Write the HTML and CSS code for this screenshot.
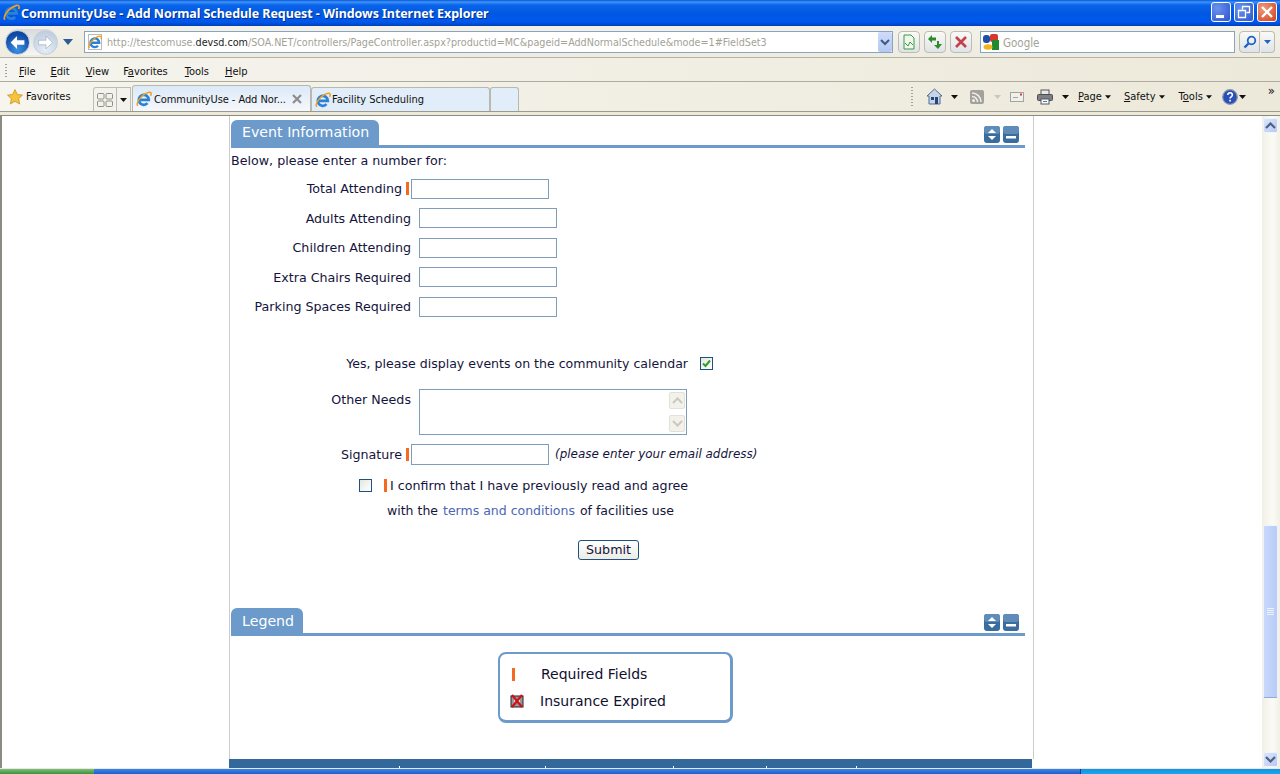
FILE: index.html
```html
<!DOCTYPE html>
<html lang="en">
<head>
<meta charset="utf-8">
<title>CommunityUse - Add Normal Schedule Request</title>
<link rel="stylesheet" href="styles.css">
</head>
<body>
<svg class="defs" width="0" height="0" aria-hidden="true">
  <symbol id="ie" viewBox="0 0 16 16">
    <path d="M3.400 8.800h9.400a5 5 0 1 0-1.300 3.400" fill="none" stroke="#2b82d4" stroke-width="2.700"/>
    <path d="M1.800 14.800C-.8 12 6 3 13 1.300c2.400-.5 2.700 1.600 1.600 3.500" fill="none" stroke="#efa01c" stroke-width="1.500"/>
  </symbol>
  <symbol id="caret" viewBox="0 0 7 4"><path d="M0 0h7L3.500 4z" fill="#111"/></symbol>
  <symbol id="updown" viewBox="0 0 16 17">
    <rect width="16" height="17" rx="3" fill="#3a6d9e"/><rect width="16" height="8" rx="3" fill="#5f8cb8"/>
    <path d="M8 3l4 4H4zM8 14l-4-4h8z" fill="#fff"/>
  </symbol>
  <symbol id="minus" viewBox="0 0 16 17">
    <rect width="16" height="17" rx="3" fill="#3a6d9e"/><rect width="16" height="8" rx="3" fill="#5f8cb8"/>
    <rect x="3" y="10" width="10" height="2.500" fill="#fff"/>
  </symbol>
</svg>

<div class="window">
  <header class="titlebar">
    <svg class="ti-icon" width="17" height="17"><use href="#ie"/></svg>
    <span class="ti-text">CommunityUse - Add Normal Schedule Request - Windows Internet Explorer</span>
    <span class="winbtn win-min"><svg width="20" height="20" viewBox="0 0 20 20"><rect x="5" y="13" width="8" height="3" fill="#fff"/></svg></span>
    <span class="winbtn win-max"><svg width="20" height="20" viewBox="0 0 20 20"><path d="M8.500 7.500V4.500h7v6h-3M4.500 8.500h7v7h-7z" fill="none" stroke="#fff" stroke-width="1.300"/></svg></span>
    <span class="winbtn win-close"><svg width="20" height="20" viewBox="0 0 20 20"><path d="M5 5l10 10M15 5L5 15" stroke="#fff" stroke-width="2.400"/></svg></span>
  </header>

  <div class="navbar">
    <div class="backfwd">
      <span class="round round-back"><svg width="23" height="23" viewBox="0 0 25 25"><path d="M5 12.500l7-7v4.500h8v5h-8v4.500z" fill="#fff"/></svg></span>
      <span class="round round-fwd"><svg width="23" height="23" viewBox="0 0 25 25"><path d="M20 12.500l-7-7v4.500H5v5h8v4.500z" fill="#fff" stroke="#9fb0c4" stroke-width=".8"/></svg></span>
    </div>
    <svg class="nav-drop" width="10" height="6" viewBox="0 0 10 6"><path d="M0 0h10L5 6z" fill="#2c5c94"/></svg>
    <div class="addr">
      <span class="addr-doc"><svg width="14" height="14"><use href="#ie"/></svg></span>
      <span class="addr-text">http://testcomuse.<b>devsd.com</b>/SOA.NET/controllers/PageController.aspx?productid=MC&amp;pageid=AddNormalSchedule&amp;mode=1#FieldSet3</span>
      <span class="addr-go"><svg width="10" height="7" viewBox="0 0 10 7"><path d="M1 1l4 4 4-4" fill="none" stroke="#3d5a86" stroke-width="2"/></svg></span>
    </div>
    <span class="toolbtn tb-compat"><svg width="16" height="16" viewBox="0 0 16 16"><path d="M3 1h7l3 3v11H3z" fill="#eef7ea" stroke="#3a9a46"/><path d="M4 9l3 3 2-4 3 3" fill="none" stroke="#3a9a46"/></svg></span>
    <span class="toolbtn"><svg width="16" height="16" viewBox="0 0 16 16"><path d="M1 5l4-4v2.500h4v3H5V9zM15 10l-4 5-4-4h3V7h2v3z" fill="#2f8a2c"/></svg></span>
    <span class="toolbtn"><svg width="16" height="16" viewBox="0 0 16 16"><path d="M3 3l10 10M13 3L3 13" stroke="#c4404a" stroke-width="2.600"/></svg></span>
    <div class="search">
      <svg width="16" height="16" viewBox="0 0 16 16"><rect width="8" height="8" fill="#d8382c" x="7" rx="2"/><rect x="0" y="1" width="7" height="8" rx="3" fill="#1c4fa8"/><rect x="9" y="6" width="7" height="10" fill="#1f8a2e"/><ellipse cx="5" cy="13" rx="4.500" ry="2.800" fill="#f2b51c"/></svg>
      <span class="search-text">Google</span>
    </div>
    <span class="searchbtn"><svg width="14" height="14" viewBox="0 0 14 14"><circle cx="8.500" cy="5.500" r="3.800" fill="none" stroke="#1e62c8" stroke-width="1.800"/><path d="M5.500 8.500L1.500 12.500" stroke="#1e62c8" stroke-width="2.400"/></svg></span>
    <span class="searchdrop"><svg width="7" height="4" viewBox="0 0 7 4"><path d="M0 0h7L3.500 4z" fill="#1e62c8"/></svg></span>
  </div>

  <nav class="menubar">
    <span class="grip"></span>
    <span class="m-file"><u>F</u>ile</span>
    <span class="m-edit"><u>E</u>dit</span>
    <span class="m-view"><u>V</u>iew</span>
    <span class="m-fav">F<u>a</u>vorites</span>
    <span class="m-tools"><u>T</u>ools</span>
    <span class="m-help"><u>H</u>elp</span>
  </nav>

  <div class="tabbar">
    <svg class="star" width="16" height="16" viewBox="0 0 16 16"><path d="M8 .5l2.300 5 5.200.6-3.900 3.600 1.100 5.300L8 12.300 3.300 15l1.100-5.300L.5 6.100l5.200-.6z" fill="#f6c33a" stroke="#c98a14" stroke-width=".7"/></svg>
    <span class="fav-label">Favorites</span>
    <span class="quick"><svg width="16" height="14" viewBox="0 0 16 14"><g fill="none" stroke="#8f8f86"><rect x=".5" y=".5" width="6.500" height="5.500" rx="1"/><rect x="9" y=".5" width="6.500" height="5.500" rx="1"/><rect x=".5" y="8" width="6.500" height="5.500" rx="1"/><rect x="9" y="8" width="6.500" height="5.500" rx="1"/></g></svg></span>
    <span class="quick-drop"><svg width="7" height="4"><use href="#caret"/></svg></span>
    <div class="tab tab-active">
      <svg width="16" height="16"><use href="#ie"/></svg>
      <span class="tab-label">CommunityUse - Add Nor...</span>
      <svg class="tab-x" width="10" height="10" viewBox="0 0 10 10"><path d="M1 1l8 8M9 1L1 9" stroke="#8d8d8d" stroke-width="2.200"/></svg>
    </div>
    <div class="tab tab-other">
      <svg width="16" height="16"><use href="#ie"/></svg>
      <span class="tab-label">Facility Scheduling</span>
    </div>
    <div class="tab tab-new"></div>

    <span class="grip grip-right"></span>
    <svg class="c-home" width="17" height="17" viewBox="0 0 17 17"><path d="M8.500 1L1 8h2v8h11V8h2z" fill="#c7d5e6" stroke="#4f6c94"/><rect x="9" y="9" width="3" height="7" fill="#27457a"/><rect x="5" y="9" width="3" height="3" fill="#27457a"/></svg>
    <svg class="c-caret-home" width="7" height="4"><use href="#caret"/></svg>
    <svg class="c-rss" width="14" height="14" viewBox="0 0 14 14"><rect width="14" height="14" rx="2" fill="#a3a29a"/><circle cx="3.500" cy="10.500" r="1.500" fill="#eee"/><path d="M2 6.500a5.500 5.500 0 0 1 5.500 5.500M2 3a9 9 0 0 1 9 9" fill="none" stroke="#eee" stroke-width="1.500"/></svg>
    <svg class="c-caret-rss" width="7" height="4" viewBox="0 0 7 4"><path d="M0 0h7L3.500 4z" fill="#c9c8bf"/></svg>
    <svg class="c-mail" width="14" height="10" viewBox="0 0 14 10"><rect x=".5" y=".5" width="13" height="9" fill="#f2f0ea" stroke="#a5a49c"/><rect x="3" y="5" width="5" height="1" fill="#a5a49c"/><rect x="10" y="1.500" width="2" height="2" fill="#d23a3a"/></svg>
    <svg class="c-print" width="16" height="16" viewBox="0 0 16 16"><rect x="4" y="1" width="8" height="5" fill="#e8e8e8" stroke="#555"/><rect x=".5" y="5.500" width="15" height="6" rx="1" fill="#7c8084" stroke="#4b4f53"/><rect x="4" y="10" width="8" height="5" fill="#fff" stroke="#555"/><rect x="6" y="12" width="4" height="1" fill="#3a78c8"/></svg>
    <svg class="c-caret-print" width="7" height="4"><use href="#caret"/></svg>
    <span class="c-menu c-page"><u>P</u>age</span><svg class="c-caret" width="6" height="4"><use href="#caret"/></svg>
    <span class="c-menu c-safety"><u>S</u>afety</span><svg class="c-caret" width="6" height="4"><use href="#caret"/></svg>
    <span class="c-menu c-tools">T<u>o</u>ols</span><svg class="c-caret" width="6" height="4"><use href="#caret"/></svg>
    <svg class="c-help" width="16" height="16" viewBox="0 0 16 16"><circle cx="8" cy="8" r="7.300" fill="#2a50b8" stroke="#8a94ad" stroke-width="1.200"/><path d="M5.800 6c0-3 4.600-3 4.600 0 0 1.800-2.400 1.800-2.400 3.500" fill="none" stroke="#fff" stroke-width="1.500"/><rect x="7.200" y="10.800" width="1.700" height="1.700" fill="#fff"/></svg>
    <svg class="c-caret-help" width="7" height="4"><use href="#caret"/></svg>
    <span class="c-more">»</span>
  </div>

  <div class="chromegap"></div>

  <div class="viewport">
    <main class="page">
      <div class="sections">
        <section>
          <div class="head">
            <h2 class="head-tab tab-event">Event Information</h2>
            <span class="head-btns">
              <svg width="16" height="17"><use href="#updown"/></svg>
              <svg width="16" height="17"><use href="#minus"/></svg>
            </span>
          </div>
          <p class="intro">Below, please enter a number for:</p>
          <div class="row row-req"><label class="lbl lbl-req">Total Attending</label><span class="req"></span><span class="field"></span></div>
          <div class="row"><label class="lbl">Adults Attending</label><span class="field"></span></div>
          <div class="row"><label class="lbl">Children Attending</label><span class="field"></span></div>
          <div class="row"><label class="lbl">Extra Chairs Required</label><span class="field"></span></div>
          <div class="row"><label class="lbl">Parking Spaces Required</label><span class="field"></span></div>

          <div class="row-cal">
            <span class="cal-text">Yes, please display events on the community calendar</span>
            <span class="check check-on"><svg width="9" height="9" viewBox="0 0 9 9"><path d="M1 4.500l2.500 2.500L8 1.500" fill="none" stroke="#2f9c2f" stroke-width="2"/></svg></span>
          </div>

          <div class="row-needs">
            <label class="lbl">Other Needs</label>
            <div class="textarea">
              <span class="ta-btn"><svg width="11" height="7" viewBox="0 0 11 7"><path d="M1 6l4.500-4.500L10 6" fill="none" stroke="#c9c9c0" stroke-width="2"/></svg></span>
              <span class="ta-btn"><svg width="11" height="7" viewBox="0 0 11 7"><path d="M1 1l4.500 4.500L10 1" fill="none" stroke="#c9c9c0" stroke-width="2"/></svg></span>
            </div>
          </div>

          <div class="row-sig">
            <label class="lbl lbl-req">Signature</label><span class="req"></span><span class="field field-sig"></span>
            <em class="hint">(please enter your email address)</em>
          </div>

          <div class="row-confirm">
            <span class="check check-off"></span>
            <span class="req req-confirm"></span>
            <span>I confirm that I have previously read and agree</span>
          </div>
          <div class="row-terms">with the <a class="terms">terms and conditions</a> of facilities use</div>
          <div class="row-submit"><button class="submit" type="button">Submit</button></div>
        </section>

        <section class="legend-section">
          <div class="head">
            <h2 class="head-tab tab-legend">Legend</h2>
            <span class="head-btns">
              <svg width="16" height="17"><use href="#updown"/></svg>
              <svg width="16" height="17"><use href="#minus"/></svg>
            </span>
          </div>
          <div class="legend-box">
            <div class="legend-row"><span class="legend-key"><span class="req"></span></span>Required Fields</div>
            <div class="legend-row"><span class="legend-key"><svg width="14" height="14" viewBox="0 0 14 14"><rect x="1" y="2" width="12" height="11" fill="#9a9a9a" stroke="#222"/><rect x="4" y="5" width="6" height="4" fill="#ddd"/><path d="M2 1l10 12M12 1L2 13" stroke="#d01018" stroke-width="2.200"/></svg></span>Insurance Expired</div>
          </div>
        </section>
      </div>
      <footer class="footbar">
        <span class="tick tick-1"></span><span class="tick tick-2"></span><span class="tick tick-3"></span><span class="tick tick-4"></span><span class="tick tick-5"></span>
      </footer>
    </main>
    <aside class="scrollbar">
      <span class="sb-btn"><svg width="11" height="7" viewBox="0 0 11 7"><path d="M1 6l4.500-4.500L10 6" fill="none" stroke="#4d6185" stroke-width="2.200"/></svg></span>
      <span class="sb-thumb"><svg width="9" height="8" viewBox="0 0 9 8"><path d="M1 .5h7M1 2.500h7M1 4.500h7M1 6.500h7" stroke="#eef2fb"/></svg></span>
      <span class="sb-btn sb-down"><svg width="11" height="7" viewBox="0 0 11 7"><path d="M1 1l4.500 4.500L10 1" fill="none" stroke="#4d6185" stroke-width="2.200"/></svg></span>
    </aside>
  </div>

  <div class="taskbar"><span class="tb-start"></span><span class="tb-tasks"></span><span class="tb-tray"></span></div>
</div>
</body>
</html>
```
FILE: styles.css
```css
* { box-sizing: border-box; }
html, body { margin: 0; height: 774px; overflow: hidden; background: #fff; }
.defs { position: absolute; }
svg { display: block; flex: none; }
.window { width: 1280px; height: 774px; display: flex; flex-direction: column; font-family: "DejaVu Sans Condensed", "DejaVu Sans", sans-serif; font-stretch: condensed; font-size: 11px; color: #111; }

/* title bar */
.titlebar { height: 26px; display: flex; align-items: center; padding: 0 3px 0 3px; background: linear-gradient(#0a57d8 0, #3d94fa 2px, #0a64ea 5px, #0058e2 14px, #0058ee 22px, #0140b8 26px); }
.ti-icon { margin: -1px 1px 0 0; }
.ti-text { color: #fff; font: bold 12.500px "Noto Sans", sans-serif; letter-spacing: -.07px; text-shadow: 1px 1px 0 #03308c; flex: 1; white-space: nowrap; }
.winbtn { width: 20px; height: 20px; margin-left: 3px; border: 1px solid #fff; border-radius: 3px; margin-top: -2px; overflow: hidden; }
.winbtn svg { margin: -1px; }
.win-min, .win-max { background: radial-gradient(circle at 30% 30%, #6a93ee, #2c55cf); }
.win-close { background: radial-gradient(circle at 30% 30%, #ee9a7c, #d2421c); }

/* address row */
.navbar { height: 32px; display: flex; align-items: center; padding: 1px 0 0 5px; background: linear-gradient(#f3f2ea, #eeece0); border-bottom: 1px solid #b5b3a6; }
.backfwd { display: flex; gap: 3px; width: 53px; height: 26px; align-items: center; background: linear-gradient(#d9dbdd, #f5f5f2); border-radius: 13px; }
.round { width: 25px; height: 25px; border-radius: 50%; }
.round-back { background: radial-gradient(circle at 50% 80%, #3e92e6, #1049a4 70%); border: 1px solid #c6d0de; }
.round-fwd { background: radial-gradient(circle at 50% 80%, #e6eef6, #b7c6d8); border: 1px solid #c6d0de; }
.nav-drop { margin-left: 5px; }
.addr { width: 809px; height: 22px; margin-left: 11px; background: #fff; border: 1px solid #8aa4c0; display: flex; align-items: center; padding-left: 3px; }
.addr-doc { width: 14px; height: 16px; background: #fff; border: 1px solid #bbb; margin-right: 5px; }
.addr-doc svg { margin: 0 0 0 -1px; }
.addr-text { flex: 1; color: #a3a296; white-space: nowrap; font-size: 10.700px; margin-top: 1px; }
.addr-text b { color: #222; font-weight: 400; }
.addr-go { width: 14px; height: 20px; background: linear-gradient(#cfdcf8, #b4c8f2); display: flex; align-items: center; justify-content: center; border-radius: 2px; }
.toolbtn { width: 22px; height: 22px; margin-left: 4px; border: 1px solid #bdbcb2; border-radius: 4px; background: linear-gradient(#fafaf6, #dfe3e8); display: flex; align-items: center; justify-content: center; }
.tb-compat { margin-left: 5px; }
.search { width: 255px; height: 22px; margin-left: 8px; background: #fff; border: 1px solid #8aa4c0; display: flex; align-items: center; gap: 4px; padding-left: 2px; }
.search-text { color: #a3a296; font-size: 11.500px; margin-top: 1px; }
.searchbtn { width: 21px; height: 22px; margin-left: 4px; border: 1px solid #bdbcb2; border-radius: 4px 0 0 4px; background: linear-gradient(#fafaf6, #dfe3e8); display: flex; align-items: center; justify-content: center; }
.searchdrop { width: 14px; height: 22px; border: 1px solid #bdbcb2; border-left: 0; border-radius: 0 4px 4px 0; background: linear-gradient(#fafaf6, #dfe3e8); display: flex; align-items: center; justify-content: center; margin-left: 1px; }

/* menu row */
.menubar { height: 24px; display: flex; align-items: center; padding-top: 3px; background: linear-gradient(90deg, #f5f4ee, #ede9da); border-bottom: 1px solid #aeaca0; color: #111; }
.menubar u, .tabbar u { text-underline-offset: 1px; }
.grip { width: 2px; height: 15px; background-image: linear-gradient(#a5a499 50%, transparent 50%); background-size: 2px 3px; }
.menubar .grip { margin-left: 5px; }
.m-file { margin-left: 12px; }
.m-edit { margin-left: 15px; }
.m-view { margin-left: 16px; }
.m-fav { margin-left: 14px; }
.m-tools { margin-left: 17px; }
.m-help { margin-left: 16px; }

/* favorites + tabs row */
.tabbar { height: 30px; display: flex; align-items: center; background: linear-gradient(90deg, #f6f5ee, #ece9da); border-bottom: 1px solid #9a9a90; }
.star { margin-left: 7px; }
.fav-label { margin-left: 3px; width: 47px; }
.quick { margin-left: 20px; width: 24px; height: 24px; align-self: flex-end; background: #f3f2ec; border: 1px solid #bdbdb4; border-bottom: 0; border-radius: 3px 0 0 0; display: flex; align-items: center; justify-content: center; }
.quick-drop { width: 14px; height: 24px; align-self: flex-end; background: #f3f2ec; border: 1px solid #bdbdb4; border-width: 1px 1px 0 0; display: flex; align-items: center; justify-content: center; }
.tab { align-self: flex-end; display: flex; align-items: center; height: 24px; border: 1px solid #b9b8ae; border-bottom: 0; border-radius: 3px 3px 0 0; background: #e1edf9; padding-left: 3px; gap: 1px; }
.tab-active { width: 179px; margin-left: 1px; height: 26px; gap: 2px; padding-top: 1px; letter-spacing: -.08px; background: linear-gradient(#dce9f8, #f6f8fb); }
.tab-other { width: 179px; background: #e1edf9; }
.tab-new { width: 29px; }
.tab-label { white-space: nowrap; }
.tab-x { margin-left: auto; margin-right: 8px; }
.grip-right { margin-left: 392px; height: 20px; }
.c-home { margin-left: 13px; }
.c-caret-home { margin-left: 8px; }
.c-rss { margin-left: 12px; }
.c-caret-rss { margin-left: 10px; }
.c-mail { margin-left: 9px; }
.c-print { margin-left: 13px; }
.c-caret-print { margin-left: 9px; }
.c-page { margin-left: 9px; }
.c-safety { margin-left: 13px; }
.c-tools { margin-left: 14px; }
.c-caret { margin-left: 3px; }
.c-help { margin-left: 10px; }
.c-caret-help { margin-left: 1px; }
.c-more { font-size: 13px; line-height: 1; margin-left: 22px; margin-top: -12px; color: #111; }
.chromegap { height: 4px; background: #ece9da; border-bottom: 1px solid #8b8b80; }

/* page */
.viewport { height: 652px; display: flex; border-left: 2px solid #8b8b80; overflow: hidden; background: #fff; }
.page { flex: 1; padding-left: 227px; font-family: "DejaVu Sans", Verdana, sans-serif; font-stretch: normal; font-size: 12.660px; color: #14143c; }
.sections { width: 805px; height: 643px; border-left: 1px solid #ccc; border-right: 1px solid #ccc; padding: 4px 8px 0 1px; }
.footbar { width: 803px; height: 9px; background: #34689a; position: relative; }
.tick { position: absolute; bottom: 0; width: 1px; height: 2px; background: #fff; }
.tick-1 { left: 170px; }
.tick-2 { left: 316px; }
.tick-3 { left: 444px; }
.tick-4 { left: 537px; }
.tick-5 { left: 627px; }

.head { height: 28px; display: flex; justify-content: space-between; border-bottom: 3px solid #6b9acb; }
.head-tab { margin: 0; height: 25px; padding: 0 0 0 11px; background: #6b9acb; color: #fff; border-radius: 6px 6px 0 0; font-size: 14.200px; font-weight: 400; line-height: 24px; white-space: nowrap; }
.tab-event { width: 148px; }
.tab-legend { width: 72px; line-height: 26px; }
.head-btns { display: flex; gap: 3px; padding: 6px 6px 0 0; }

.intro { margin: 0 0 4.750px; height: 26px; line-height: 26px; }
.row { display: flex; align-items: center; height: 20px; margin-bottom: 9.500px; }
.lbl { width: 180px; text-align: right; margin-right: 8px; flex: none; }
.lbl-req { width: 171px; margin-right: 4px; }
.req { display: block; width: 3px; height: 13px; background: #f46a1e; flex: none; margin-right: 2px; }
.field { display: block; width: 138px; height: 20px; background: #fff; border: 1px solid #7f9db9; flex: none; }

.row-cal { margin-top: 36.750px; height: 20px; display: flex; align-items: center; padding-left: 115px; }
.cal-text { white-space: nowrap; width: 342px; text-align: right; margin-right: 12px; font-size: 12.550px; }
.check { width: 13px; height: 13px; border: 1px solid #1c5180; display: flex; align-items: center; justify-content: center; background: linear-gradient(135deg, #e6e6de, #fff); flex: none; }

.row-needs { display: flex; margin-top: 15px; }
.row-needs .lbl { padding-top: 3px; }
.textarea { width: 268px; height: 46px; border: 1px solid #7f9db9; padding: 2px 1px; display: flex; flex-direction: column; align-items: flex-end; justify-content: space-between; }
.ta-btn { width: 16px; height: 17px; background: #f2f1ea; border: 1px solid #e2e1d8; border-radius: 2px; display: flex; align-items: center; justify-content: center; }

.row-sig { display: flex; align-items: center; height: 21px; margin-top: 9px; }
.row-sig .req { height: 13px; }
.field-sig { height: 21px; }
.hint { margin-left: 6px; white-space: nowrap; margin-top: -1px; font-size: 11.950px; }

.row-confirm { display: flex; align-items: center; height: 13px; margin-top: 14px; padding-left: 128px; white-space: nowrap; }
.req-confirm { margin-left: 12px; margin-right: 3px; }
.row-terms { margin-top: 11px; height: 15px; line-height: 15px; padding-left: 156px; white-space: nowrap; font-size: 12.500px; }
.terms { color: #4a66b4; margin: 0 1px; }
.row-submit { margin-top: 22px; padding-left: 347px; height: 20px; }
.submit { display: block; width: 61px; height: 20px; padding: 0; border: 1px solid #1c5180; border-radius: 3px; background: linear-gradient(#fff, #ecebe4); font: 12.660px "DejaVu Sans", Verdana, sans-serif; color: #14143c; }

.legend-section { margin-top: 48px; }
.legend-box { margin: 16px 0 0 267px; width: 235px; height: 71px; border: 2px solid #6b9acb; border-width: 2px 3px 3px 2px; border-radius: 8px; padding: 7px 0 0 12px; font-size: 14px; color: #101030; }
.legend-row { display: flex; align-items: center; height: 27px; }
.legend-key { width: 29px; display: flex; }
.legend-row:last-child .legend-key { width: 28px; margin-left: 0; }
.legend-row:last-child .legend-key svg { margin-left: -2px; }

/* scrollbar */
.scrollbar { width: 18px; height: 652px; margin: 0; background: linear-gradient(90deg, #f1f0e6, #fbfbf6 60%, #f1f0e6); display: flex; flex-direction: column; padding: 2px 2px 0 1px; }
.sb-btn { width: 15px; height: 15px; background: linear-gradient(135deg, #dbe6fb, #b8caf4); border: 1px solid #eef3fc; border-radius: 2px; display: flex; align-items: center; justify-content: center; flex: none; }
.sb-thumb { width: 15px; height: 173px; margin-top: 392px; background: linear-gradient(90deg, #c9d8fb, #b8ccf8); border: 1px solid #eef3fc; border-bottom: 1px solid #8ca8dc; border-radius: 2px; display: flex; align-items: center; justify-content: center; flex: none; }
.sb-down { margin-top: 54px; }

/* taskbar */
.taskbar { height: 6px; display: flex; flex: none; border-top: 1px solid #e9eadf; }
.tb-start { width: 94px; background: linear-gradient(#7fbf7a, #3d8f3d); }
.tb-tasks { flex: 1; background: linear-gradient(#3f86e6, #1f5cd0); }
.tb-tray { width: 200px; background: linear-gradient(#1c8ee6, #12a8ec); border-left: 1px solid #0b3a8c; }
```
